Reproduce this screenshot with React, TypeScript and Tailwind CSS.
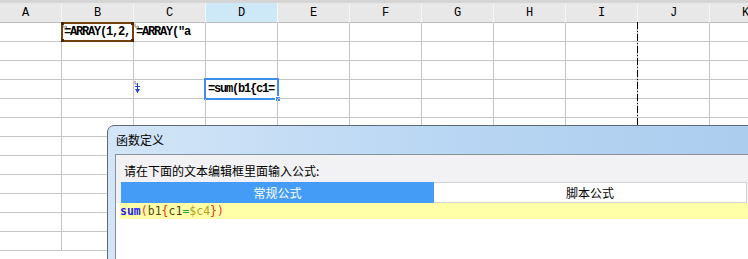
import React from 'react';

const cols = ['A', 'B', 'C', 'D', 'E', 'F', 'G', 'H', 'I', 'J', 'K'];
const rowCount = 12;

const monoFont = "font-['Liberation_Mono','Courier_New',monospace] text-[12px] text-black";
const cellFont = `font-['Liberation_Mono','Courier_New',monospace] font-bold text-[12px] text-black`;

const CornerMark = () => (
	<svg className="absolute left-[0px] top-[0px]" width="6" height="6" viewBox="0 0 6 6">
		<path d="M1 0.5 L1 4 L4.5 4" stroke="#8a8a8a" strokeWidth="1" fill="none" />
		<path d="M3.5 2.5 L5 4 L3.5 5.5" stroke="#8a8a8a" strokeWidth="1" fill="none" />
	</svg>
);

const ArrowMark = () => (
	<svg className="absolute left-[0px] top-[1px]" width="8" height="13" viewBox="0 0 8 13">
		<path d="M1 0 L1 3 L3.5 3" stroke="#8a8a8a" strokeWidth="1" fill="none" />
		<path d="M3.5 2 L3.5 12" stroke="#1f3fd8" strokeWidth="1" />
		<path d="M1 5.5 L6 5.5" stroke="#1f3fd8" strokeWidth="1" />
		<path d="M1 8 L6 8 L3.5 12 Z" fill="#1f3fd8" />
	</svg>
);

function Cell({ r, c }: { r: number; c: number }) {
	let content: React.ReactNode = null;
	if (r === 0 && c === 1) {
		content = (
			<>
				<CornerMark />
				<span className={`${cellFont} tracking-[-1.2px] pl-[2px] whitespace-nowrap`}>=ARRAY(1,2,</span>
				<div className="absolute -left-[1px] -top-[1px] w-[73px] h-[20px] border-2 border-[#74420f]">
					<div className="absolute -left-[2px] -top-[2px] w-[3px] h-[3px] bg-[#4a2806]" />
					<div className="absolute -right-[2px] -top-[2px] w-[3px] h-[3px] bg-[#4a2806]" />
					<div className="absolute -left-[2px] -bottom-[2px] w-[3px] h-[3px] bg-[#4a2806]" />
					<div className="absolute -right-[2px] -bottom-[2px] w-[3px] h-[3px] bg-[#4a2806]" />
				</div>
			</>
		);
	} else if (r === 0 && c === 2) {
		content = (
			<>
				<CornerMark />
				<span className={`${cellFont} tracking-[-1.2px] pl-[2px] whitespace-nowrap`}>=ARRAY("a</span>
			</>
		);
	} else if (r === 3 && c === 2) {
		content = <ArrowMark />;
	} else if (r === 3 && c === 3) {
		content = (
			<>
				<span className={`${cellFont} tracking-[-1.2px] pl-[2px] whitespace-nowrap`}>=sum(b1{'{'}c1=</span>
				<div className="absolute -left-[2px] -top-[2px] w-[75px] h-[22px] border-2 border-[#3b8eea]" />
				<div className="absolute -right-[4px] -bottom-[4px] w-[6px] h-[6px] bg-[#3b8eea] border border-white" />
			</>
		);
	}
	return (
		<div className="relative w-[72px] h-[19px] shrink-0 border-r border-b border-[#c4c4c4] flex items-center">
			{content}
		</div>
	);
}

export default function App() {
	return (
		<div className="relative w-[748px] h-[259px] overflow-hidden bg-white">
			<div className="h-[3px] bg-[#d5d5d5]" />
			<div className="flex -ml-[10px]">
				{cols.map((c) => (
					<div
						key={c}
						className={`w-[72px] h-[20px] shrink-0 pt-[1px] border-r border-b border-r-[#f6f6f6] border-b-[#bdbdbd] flex items-center justify-center ${monoFont} ${c === 'D' ? 'bg-[#cde9f7]' : 'bg-[#e8e8e8]'}`}
					>
						{c}
					</div>
				))}
			</div>
			{Array.from({ length: rowCount }).map((_, r) => (
				<div key={r} className="flex -ml-[10px]">
					{cols.map((c, ci) => (
						<Cell key={c} r={r} c={ci} />
					))}
				</div>
			))}

			{/* page break */}
			<div className="absolute left-[637px] top-[22px] bottom-0 w-[1px] bg-[repeating-linear-gradient(to_bottom,#000_0_7px,transparent_7px_9px,#000_9px_10px,transparent_10px_12px)]" />

			{/* dialog */}
			<div className="absolute left-[107px] top-[125px] w-[700px] h-[160px] rounded-t-[7px] border border-[#5f6a76] bg-gradient-to-r from-[#d3e5f7] via-[#b8d6f3] to-[#aacbee] flex flex-col">
				<div className="h-[28px] pl-[8px] flex items-center text-[12px] text-black font-['Noto_Sans_CJK_SC',sans-serif]">
					函数定义
				</div>
				<div className="ml-[7px] flex-1 border-l border-t border-[#8a9199] bg-[#f2f2f4] flex flex-col font-['Noto_Sans_CJK_SC',sans-serif]">
					<div className="h-[27px] pl-[8px] pt-[5px] flex items-center text-[12px] text-black">
						请在下面的文本编辑框里面输入公式:
					</div>
					<div className="ml-[5px] h-[21px] flex text-[12px]">
						<div className="w-[313px] bg-[#449cf7] text-white flex items-center justify-center">常规公式</div>
						<div className="w-[313px] bg-white border-y border-r border-[#d2d2d2] text-black flex items-center justify-center">
							脚本公式
						</div>
					</div>
					<div className="flex-1 bg-white pl-[4px]">
						<div className="h-[16px] bg-[#ffffa8] flex items-center font-['DejaVu_Sans_Mono',monospace] text-[11.5px] leading-[16px] whitespace-pre">
							<span className="text-[#1f1ff0] font-semibold">sum</span>
							<span className="text-[#f03a2a]">(</span>
							<span className="text-[#5a4a12]">b1</span>
							<span className="text-[#f02a20]">{'{'}</span>
							<span className="text-[#4a4214]">c1</span>
							<span className="text-[#22a046]">=</span>
							<span className="text-[#b4a026]">$c4</span>
							<span className="text-[#f02a20]">{'}'}</span>
							<span className="text-[#f03a2a]">)</span>
						</div>
					</div>
				</div>
			</div>
		</div>
	);
}
